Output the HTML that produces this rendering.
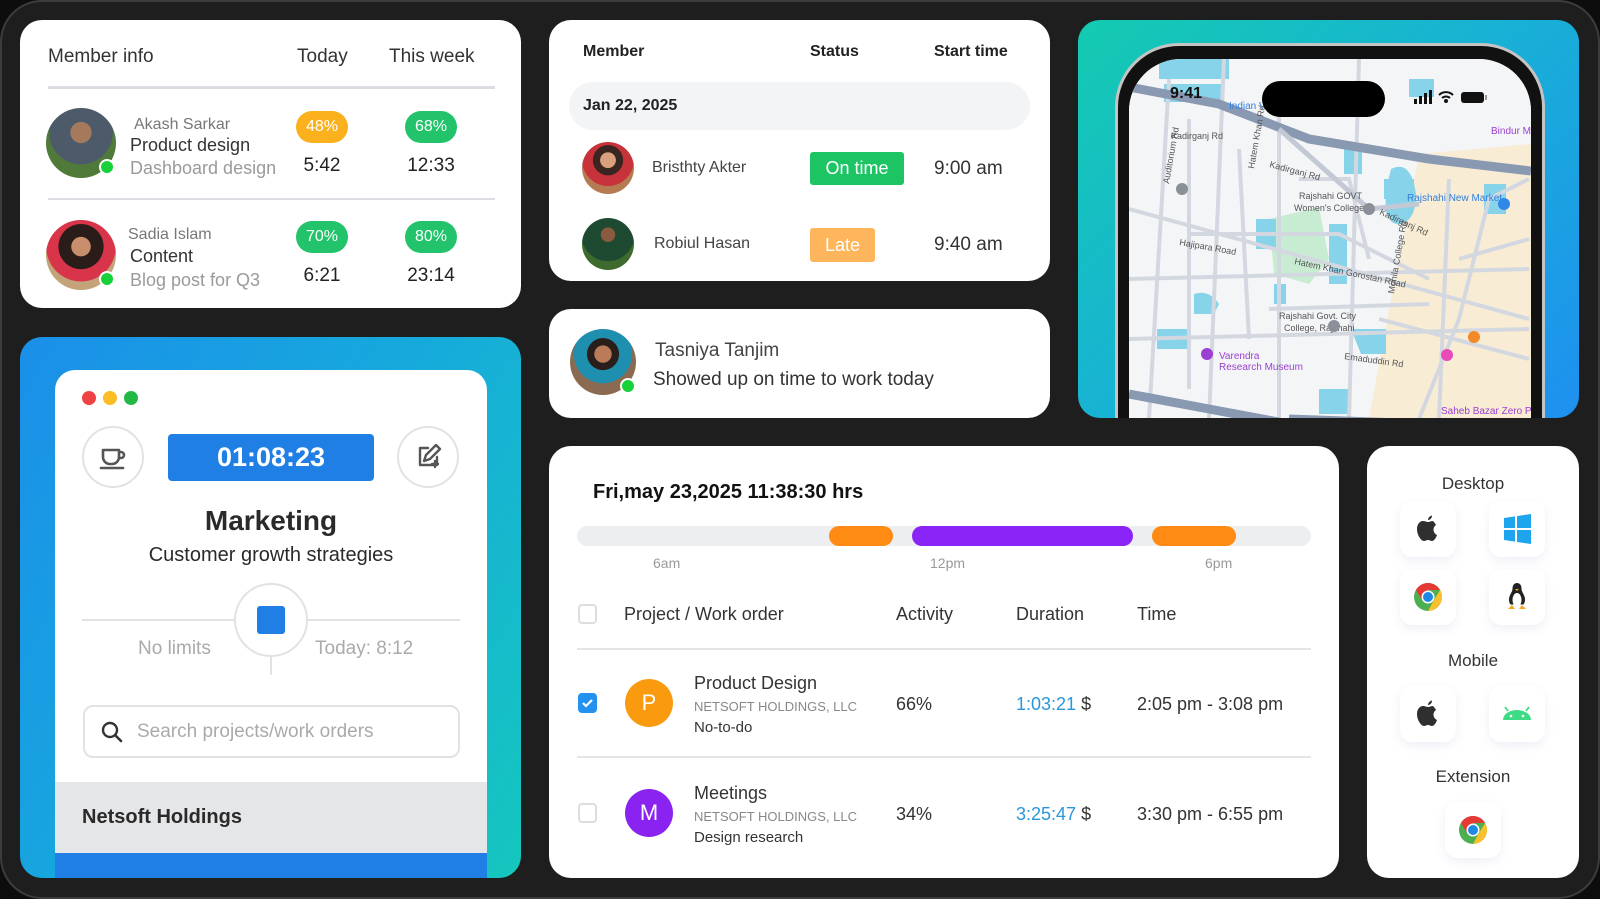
<!DOCTYPE html>
<html><head><meta charset="utf-8"><style>
*{box-sizing:border-box;margin:0;padding:0}
body{width:1600px;height:899px;background:#0d0d0d;font-family:"Liberation Sans",Arial,sans-serif;color:#2b2b2b;overflow:hidden;position:relative}
.frame{position:absolute;left:0;top:0;width:1600px;height:899px;background:#1e1e1e;border:2px solid #3c3c3c;border-radius:42px}
.card{position:absolute;background:#fff;border-radius:22px;overflow:hidden}
.abs{position:absolute;white-space:nowrap}
.av{position:absolute;border-radius:50%}
.dot{position:absolute;width:16px;height:16px;border-radius:50%;background:#16d13a;border:2px solid #fff}
.badge{position:absolute;width:52px;height:32px;border-radius:16px;color:#fff;font-size:16px;text-align:center;line-height:32px}
.tile{position:absolute;width:56px;height:56px;border-radius:12px;background:#fff;box-shadow:0 4px 10px rgba(120,130,180,.12)}
.ctr{position:absolute;text-align:center;white-space:nowrap}
</style></head><body>
<div class="frame"></div>

<!-- Card 1 member info -->
<div class="card" style="left:20px;top:20px;width:501px;height:288px">
  <div class="abs" style="left:28px;top:26px;font-size:19px;color:#333">Member info</div>
  <div class="abs" style="left:277px;top:26px;font-size:19px;color:#333">Today</div>
  <div class="abs" style="left:369px;top:26px;font-size:19px;color:#333">This week</div>
  <div class="abs" style="left:28px;top:66px;width:447px;height:3px;background:#dcdde2"></div>
  <div class="av" style="left:26px;top:88px;width:70px;height:70px;background:radial-gradient(circle at 50% 35%,#a57a5c 0 18%,#4d5a6a 19% 55%,#4f7a3a 56%)"></div>
  <div class="dot" style="left:79px;top:139px"></div>
  <div class="abs" style="left:114px;top:96px;font-size:16px;color:#777">Akash Sarkar</div>
  <div class="abs" style="left:110px;top:115px;font-size:18px;color:#333">Product design</div>
  <div class="abs" style="left:110px;top:138px;font-size:18px;color:#9a9a9a">Dashboard design</div>
  <div class="badge" style="left:276px;top:91px;background:#fbb01e">48%</div>
  <div class="badge" style="left:385px;top:91px;background:#22c36a">68%</div>
  <div class="ctr" style="left:262px;width:80px;top:135px;font-size:19px;color:#222">5:42</div>
  <div class="ctr" style="left:371px;width:80px;top:135px;font-size:19px;color:#222">12:33</div>
  <div class="abs" style="left:28px;top:178px;width:447px;height:2px;background:#dcdde2"></div>
  <div class="av" style="left:26px;top:200px;width:70px;height:70px;background:radial-gradient(circle at 50% 38%,#c98e6c 0 17%,#2a1c18 18% 40%,#d8344a 41% 62%,#c4a37a 63%)"></div>
  <div class="dot" style="left:79px;top:251px"></div>
  <div class="abs" style="left:108px;top:206px;font-size:16px;color:#777">Sadia Islam</div>
  <div class="abs" style="left:110px;top:226px;font-size:18px;color:#333">Content</div>
  <div class="abs" style="left:110px;top:250px;font-size:18px;color:#9a9a9a">Blog post for Q3</div>
  <div class="badge" style="left:276px;top:201px;background:#22c36a">70%</div>
  <div class="badge" style="left:385px;top:201px;background:#22c36a">80%</div>
  <div class="ctr" style="left:262px;width:80px;top:245px;font-size:19px;color:#222">6:21</div>
  <div class="ctr" style="left:371px;width:80px;top:245px;font-size:19px;color:#222">23:14</div>
</div>

<!-- Card 2 timer -->
<div class="card" style="left:20px;top:337px;width:501px;height:541px;background:linear-gradient(120deg,#1b8fe9 0%,#16aadc 50%,#15c7be 100%)">
  <div style="position:absolute;left:35px;top:33px;width:432px;height:520px;background:#fff;border-radius:20px 20px 0 0;overflow:hidden">
    <div class="av" style="left:27px;top:21px;width:14px;height:14px;background:#ef4343"></div>
    <div class="av" style="left:48px;top:21px;width:14px;height:14px;background:#fbbc24"></div>
    <div class="av" style="left:69px;top:21px;width:14px;height:14px;background:#22b845"></div>
    <div class="av" style="left:27px;top:56px;width:62px;height:62px;border:2px solid #e2e2e2;background:#fff">
      <svg width="58" height="58" viewBox="0 0 58 58" style="position:absolute;left:0;top:0"><path d="M19 22h16v7a7 7 0 0 1-7 7h-2a7 7 0 0 1-7-7z M35 24h2a3 3 0 0 1 0 6h-2 M17 40h22" fill="none" stroke="#555" stroke-width="2.6" stroke-linecap="round" stroke-linejoin="round"/></svg>
    </div>
    <div class="abs" style="left:113px;top:64px;width:206px;height:47px;background:#1f7fe5;border-radius:4px;color:#fff;font-weight:bold;font-size:27px;text-align:center;line-height:47px">01:08:23</div>
    <div class="av" style="left:342px;top:56px;width:62px;height:62px;border:2px solid #e2e2e2;background:#fff">
      <svg width="58" height="58" viewBox="0 0 58 58" style="position:absolute;left:0;top:0"><path d="M29 20h-8v17h17v-8 M25 33l2-6 10-10 4 4-10 10z M36 33v6 M33 36h6" fill="none" stroke="#555" stroke-width="2.4" stroke-linecap="round" stroke-linejoin="round"/></svg>
    </div>
    <div class="abs" style="left:0;width:432px;top:135px;text-align:center;font-weight:bold;font-size:28px;color:#2a2a2a">Marketing</div>
    <div class="abs" style="left:0;width:432px;top:174px;text-align:center;font-size:20px;color:#2a2a2a">Customer growth strategies</div>
    <div class="abs" style="left:27px;top:249px;width:378px;height:2px;background:#e2e2e2"></div>
    <div class="abs" style="left:215px;top:287px;width:2px;height:18px;background:#e2e2e2"></div>
    <div class="av" style="left:179px;top:213px;width:74px;height:74px;border:2px solid #e2e2e2;background:#fff"></div>
    <div class="abs" style="left:202px;top:236px;width:28px;height:28px;background:#1f7fe5;border-radius:3px"></div>
    <div class="abs" style="left:83px;top:268px;font-size:19px;color:#aaa">No limits</div>
    <div class="abs" style="left:260px;top:268px;font-size:19px;color:#aaa">Today: 8:12</div>
    <div class="abs" style="left:28px;top:335px;width:377px;height:53px;border:2px solid #e2e2e2;border-radius:10px"></div>
    <svg class="abs" style="left:45px;top:350px" width="24" height="24" viewBox="0 0 24 24"><circle cx="10" cy="10" r="7" fill="none" stroke="#333" stroke-width="2.4"/><path d="M15 15l6 6" stroke="#333" stroke-width="2.6" stroke-linecap="round"/></svg>
    <div class="abs" style="left:82px;top:351px;font-size:19px;color:#aaa">Search projects/work orders</div>
    <div class="abs" style="left:0;top:412px;width:432px;height:71px;background:#e5e6e8"></div>
    <div class="abs" style="left:27px;top:436px;font-weight:bold;font-size:20px;color:#2a2a2a">Netsoft Holdings</div>
    <div class="abs" style="left:0;top:483px;width:432px;height:60px;background:#1f7fe5"></div>
  </div>
</div>

<!-- Card 3 status -->
<div class="card" style="left:549px;top:20px;width:501px;height:261px">
  <div class="abs" style="left:34px;top:23px;font-size:16px;font-weight:bold;color:#222">Member</div>
  <div class="abs" style="left:261px;top:23px;font-size:16px;font-weight:bold;color:#222">Status</div>
  <div class="abs" style="left:385px;top:23px;font-size:16px;font-weight:bold;color:#222">Start time</div>
  <div class="abs" style="left:20px;top:62px;width:461px;height:48px;background:#f3f4f6;border-radius:24px"></div>
  <div class="abs" style="left:34px;top:77px;font-size:16px;font-weight:bold;color:#222">Jan 22, 2025</div>
  <div class="av" style="left:33px;top:122px;width:52px;height:52px;background:radial-gradient(circle at 50% 35%,#d9a07e 0 18%,#3a2520 19% 35%,#c8323a 36% 60%,#b57c54 61%)"></div>
  <div class="abs" style="left:103px;top:139px;font-size:16px;color:#444">Bristhty Akter</div>
  <div class="abs" style="left:261px;top:132px;width:94px;height:33px;background:#1dc464;border-radius:3px;color:#fff;font-size:18px;text-align:center;line-height:33px">On time</div>
  <div class="abs" style="left:385px;top:138px;font-size:19px;color:#333">9:00 am</div>
  <div class="av" style="left:33px;top:198px;width:52px;height:52px;background:radial-gradient(circle at 50% 32%,#8c5a3e 0 16%,#1f4a32 17% 60%,#3e6a2e 61%)"></div>
  <div class="abs" style="left:105px;top:215px;font-size:16px;color:#444">Robiul Hasan</div>
  <div class="abs" style="left:261px;top:208px;width:65px;height:34px;background:#ffb55c;border-radius:3px;color:#fff;font-size:18px;text-align:center;line-height:34px">Late</div>
  <div class="abs" style="left:385px;top:214px;font-size:19px;color:#333">9:40 am</div>
</div>

<!-- Card 4 notification -->
<div class="card" style="left:549px;top:309px;width:501px;height:109px">
  <div class="av" style="left:21px;top:20px;width:66px;height:66px;background:radial-gradient(circle at 50% 38%,#b97b5a 0 16%,#2a1e1a 17% 30%,#1f8fb0 31% 55%,#8a6a50 56%)"></div>
  <div class="dot" style="left:71px;top:69px"></div>
  <div class="abs" style="left:106px;top:31px;font-size:19px;color:#444">Tasniya Tanjim</div>
  <div class="abs" style="left:104px;top:60px;font-size:19px;color:#333">Showed up on time to work today</div>
</div>

<!-- Card 5 map phone -->
<div class="card" style="left:1078px;top:20px;width:501px;height:398px;background:linear-gradient(135deg,#14cbb0 0%,#18b3d3 45%,#1e90f0 100%)">
  <div style="position:absolute;left:37px;top:23px;width:430px;height:440px;border-radius:64px;background:#111;border:3px solid #c4c4c4">
    <div style="position:absolute;left:11px;top:13px;width:402px;height:430px;border-radius:52px;overflow:hidden;background:#f4f5f7">
      <svg width="402" height="360" viewBox="0 0 402 360">
        <rect width="402" height="360" fill="#f4f5f7"/>
        <path d="M290 95 L402 85 L402 360 L240 360 L260 250 L280 150Z" fill="#f8ecd5"/>
        <path d="M140 160 L190 148 L200 200 L180 225 L145 215Z" fill="#c8ecd2"/>
        <g fill="#86d3ea">
          <path d="M30 0h70v20H30z M35 25h60v18H35z"/><path d="M262 110q20-10 25 25q0 30-20 30q-18-5-5-55z"/>
          <path d="M127 160h20v30h-20z"/><path d="M200 165h18v60h-18z"/><path d="M222 270h35v25h-25z"/>
          <path d="M65 235q15-5 25 10l-5 10h-20z"/><path d="M28 270h30v20h-30z"/><path d="M145 225h12v20h-12z"/>
          <path d="M255 120h30v20h-30z"/><path d="M355 125h22v30h-22z"/><path d="M280 20h25v18h-25z"/><path d="M190 330h30v25h-30z"/><path d="M215 90h18v25h-18z"/>
        </g>
        <g fill="none" stroke="#d3d8e0" stroke-width="4">
          <path d="M40 20 L20 360"/><path d="M95 0 L90 120 L80 360"/><path d="M110 90 L120 280"/><path d="M0 150 L400 260"/>
          <path d="M60 175 L210 175 L300 220"/><path d="M0 220 L400 210"/><path d="M170 120 L220 120 L240 200"/><path d="M230 0 L220 360"/>
          <path d="M320 120 L310 360"/><path d="M0 280 L400 270"/><path d="M330 200 L400 180"/><path d="M60 60 L60 330"/><path d="M140 250 L300 245"/>
          <path d="M400 120 L360 140 L330 260 L290 360"/><path d="M150 30 L150 360"/><path d="M250 260 L400 300"/>
        </g>
        <g fill="none" stroke="#8a99b2" stroke-width="9">
          <path d="M0 28 L90 45 L180 80 L300 100 L402 112"/>
          <path d="M0 335 L80 350 L160 365"/><path d="M160 360 L300 365"/>
        </g>
        <path d="M150 70 L240 150 L290 145" fill="none" stroke="#c2c9d4" stroke-width="5"/>
        <g font-family="Liberation Sans,sans-serif" font-size="9" fill="#555">
          <text x="42" y="80">Kadirganj Rd</text>
          <text x="140" y="108" transform="rotate(15 140 108)">Kadirganj Rd</text>
          <text x="250" y="155" transform="rotate(25 250 155)">Kadirganj Rd</text>
          <text x="170" y="140">Rajshahi GOVT</text><text x="165" y="152">Women's College</text>
          <text x="50" y="186" transform="rotate(10 50 186)">Hajipara Road</text>
          <text x="165" y="205" transform="rotate(12 165 205)">Hatem Khan Gorostan Road</text>
          <text x="150" y="260">Rajshahi Govt. City</text><text x="155" y="272">College, Rajshahi</text>
          <text x="215" y="300" transform="rotate(8 215 300)">Emaduddin Rd</text>
          <text x="265" y="235" transform="rotate(-80 265 235)">Mohila College Rd</text>
          <text x="40" y="125" transform="rotate(-80 40 125)">Auditorium Rd</text>
          <text x="125" y="110" transform="rotate(-80 125 110)">Hatem Khan Rd</text>
        </g>
        <g font-family="Liberation Sans,sans-serif" font-size="10" fill="#2f7fe0">
          <text x="278" y="142">Rajshahi New Market</text><text x="100" y="50">Indian Vi</text>
        </g>
        <g font-family="Liberation Sans,sans-serif" font-size="10" fill="#9a3fd1">
          <text x="90" y="300">Varendra</text><text x="90" y="311">Research Museum</text><text x="312" y="355">Saheb Bazar Zero Point</text><text x="362" y="75">Bindur Mo</text>
        </g>
        <circle cx="375" cy="145" r="6" fill="#2f87e8"/><circle cx="345" cy="278" r="6" fill="#f28a2a"/><circle cx="318" cy="296" r="6" fill="#e84ab8"/><circle cx="78" cy="295" r="6" fill="#9a3fd1"/>
        <circle cx="53" cy="130" r="6" fill="#8a8f98"/><circle cx="240" cy="150" r="6" fill="#8a8f98"/><circle cx="205" cy="267" r="6" fill="#8a8f98"/>
      </svg>
      <div class="abs" style="left:41px;top:26px;font-size:16px;font-weight:bold;color:#111">9:41</div>
      <div class="abs" style="left:133px;top:22px;width:123px;height:36px;border-radius:18px;background:#000"></div>
      <svg class="abs" style="left:285px;top:30px" width="80" height="16" viewBox="0 0 80 16">
        <rect x="0" y="10" width="3" height="5" fill="#111"/><rect x="5" y="7" width="3" height="8" fill="#111"/><rect x="10" y="4" width="3" height="11" fill="#111"/><rect x="15" y="1" width="3" height="14" fill="#111"/>
        <path d="M25 6a10 10 0 0 1 14 0M28 9a6 6 0 0 1 8 0" fill="none" stroke="#111" stroke-width="2"/><circle cx="32" cy="12" r="2" fill="#111"/>
        <rect x="47" y="3" width="23" height="11" rx="3" fill="#111"/><rect x="71" y="6" width="2" height="5" fill="#999"/>
      </svg>
    </div>
  </div>
</div>

<!-- Card 6 timeline -->
<div class="card" style="left:549px;top:446px;width:790px;height:432px">
  <div class="abs" style="left:44px;top:35px;font-size:20px;font-weight:bold;color:#111">Fri,may 23,2025 11:38:30 hrs</div>
  <div class="abs" style="left:28px;top:80px;width:734px;height:20px;background:#eceef0;border-radius:10px"></div>
  <div class="abs" style="left:280px;top:80px;width:64px;height:20px;background:#ff8a14;border-radius:10px"></div>
  <div class="abs" style="left:363px;top:80px;width:221px;height:20px;background:#8a23f5;border-radius:10px"></div>
  <div class="abs" style="left:603px;top:80px;width:84px;height:20px;background:#ff8a14;border-radius:10px"></div>
  <div class="abs" style="left:104px;top:109px;font-size:14px;color:#999">6am</div>
  <div class="abs" style="left:381px;top:109px;font-size:14px;color:#999">12pm</div>
  <div class="abs" style="left:656px;top:109px;font-size:14px;color:#999">6pm</div>
  <div class="abs" style="left:29px;top:158px;width:19px;height:20px;border:2px solid #ddd;border-radius:4px"></div>
  <div class="abs" style="left:75px;top:158px;font-size:18px;color:#333">Project / Work order</div>
  <div class="abs" style="left:347px;top:158px;font-size:18px;color:#333">Activity</div>
  <div class="abs" style="left:467px;top:158px;font-size:18px;color:#333">Duration</div>
  <div class="abs" style="left:588px;top:158px;font-size:18px;color:#333">Time</div>
  <div class="abs" style="left:28px;top:202px;width:734px;height:2px;background:#e4e5e8"></div>
  <div class="abs" style="left:29px;top:247px;width:19px;height:20px;background:#2291f0;border-radius:4px"><svg width="19" height="20" viewBox="0 0 19 20"><path d="M5 10l3 3 6-6" fill="none" stroke="#fff" stroke-width="2.2"/></svg></div>
  <div class="av" style="left:76px;top:233px;width:48px;height:48px;background:#fa9a0e;color:#fff;font-size:22px;text-align:center;line-height:48px">P</div>
  <div class="abs" style="left:145px;top:227px;font-size:18px;color:#333">Product Design</div>
  <div class="abs" style="left:145px;top:253px;font-size:13px;color:#888">NETSOFT HOLDINGS, LLC</div>
  <div class="abs" style="left:145px;top:273px;font-size:15px;color:#333">No-to-do</div>
  <div class="abs" style="left:347px;top:248px;font-size:18px;color:#333">66%</div>
  <div class="abs" style="left:467px;top:248px;font-size:18px;color:#2a96dc">1:03:21 <span style="color:#333">$</span></div>
  <div class="abs" style="left:588px;top:248px;font-size:18px;color:#333">2:05 pm - 3:08 pm</div>
  <div class="abs" style="left:28px;top:310px;width:734px;height:2px;background:#e4e5e8"></div>
  <div class="abs" style="left:29px;top:357px;width:19px;height:20px;border:2px solid #ddd;border-radius:4px"></div>
  <div class="av" style="left:76px;top:343px;width:48px;height:48px;background:#8a23f0;color:#fff;font-size:22px;text-align:center;line-height:48px">M</div>
  <div class="abs" style="left:145px;top:337px;font-size:18px;color:#333">Meetings</div>
  <div class="abs" style="left:145px;top:363px;font-size:13px;color:#888">NETSOFT HOLDINGS, LLC</div>
  <div class="abs" style="left:145px;top:383px;font-size:15px;color:#333">Design research</div>
  <div class="abs" style="left:347px;top:358px;font-size:18px;color:#333">34%</div>
  <div class="abs" style="left:467px;top:358px;font-size:18px;color:#2a96dc">3:25:47 <span style="color:#333">$</span></div>
  <div class="abs" style="left:588px;top:358px;font-size:18px;color:#333">3:30 pm - 6:55 pm</div>
</div>

<!-- Card 7 platforms -->
<div class="card" style="left:1367px;top:446px;width:212px;height:432px">
  <div class="abs" style="left:0;width:212px;top:28px;text-align:center;font-size:17px;color:#333">Desktop</div>
  <div class="tile" style="left:33px;top:55px"><svg width="56" height="56" viewBox="0 0 56 56"><path d="M33 20c-2 0-3.5 1-5 1s-3-1-5-1c-3 0-6 3-6 8 0 6 4 12 7 12 1.5 0 2.5-1 4-1s2.5 1 4 1c2 0 4-3 5-6-2-1-3.5-3-3.5-5.5 0-2 1-3.5 2.5-4.5-1-2-3-4-3-4z M28 19c0-2 1.5-4 4-4.5 0 2.5-1.5 4.3-4 4.5z" fill="#2f2f2f"/></svg></div>
  <div class="tile" style="left:122px;top:55px"><svg width="56" height="56" viewBox="0 0 56 56"><path d="M15 17l11-1.6V27H15z M28 15.1L42 13v14H28z M15 29h11v11.6L15 39z M28 29h14v14l-14-2z" fill="#1ea5ee"/></svg></div>
  <div class="tile" style="left:33px;top:123px"><svg width="56" height="56" viewBox="0 0 56 56"><circle cx="28" cy="28" r="14" fill="#4caf50"/><path d="M40.1 21A14 14 0 0 1 28 42l6-11z" fill="#fbc02d"/><path d="M28 14a14 14 0 0 0-12.1 7L22 31l6-10h12.1A14 14 0 0 0 28 14z" fill="#e53935"/><circle cx="28" cy="28" r="6.5" fill="#fff"/><circle cx="28" cy="28" r="5" fill="#1e88e5"/></svg></div>
  <div class="tile" style="left:122px;top:123px"><svg width="56" height="56" viewBox="0 0 56 56"><path d="M28 14c-3 0-4.5 2.5-4.5 5.5 0 3-2 5-3 8-1 3-.5 6 1 8h13c1.5-2 2-5 1-8s-3-5-3-8c0-3-1.5-5.5-4.5-5.5z" fill="#222"/><ellipse cx="28" cy="31" rx="4.5" ry="7" fill="#fff"/><path d="M19 40l4-4 3 4z M37 40l-4-4-3 4z" fill="#f5a623"/><path d="M26 20h4l-2 2z" fill="#f5a623"/></svg></div>
  <div class="abs" style="left:0;width:212px;top:205px;text-align:center;font-size:17px;color:#333">Mobile</div>
  <div class="tile" style="left:33px;top:240px"><svg width="56" height="56" viewBox="0 0 56 56"><path d="M33 20c-2 0-3.5 1-5 1s-3-1-5-1c-3 0-6 3-6 8 0 6 4 12 7 12 1.5 0 2.5-1 4-1s2.5 1 4 1c2 0 4-3 5-6-2-1-3.5-3-3.5-5.5 0-2 1-3.5 2.5-4.5-1-2-3-4-3-4z M28 19c0-2 1.5-4 4-4.5 0 2.5-1.5 4.3-4 4.5z" fill="#2f2f2f"/></svg></div>
  <div class="tile" style="left:122px;top:240px"><svg width="56" height="56" viewBox="0 0 56 56"><path d="M14 34a14 10 0 0 1 28 0z" fill="#3ddc84"/><path d="M19 25l-3-4 M37 25l3-4" stroke="#3ddc84" stroke-width="1.8"/><circle cx="22" cy="30" r="1.3" fill="#fff"/><circle cx="34" cy="30" r="1.3" fill="#fff"/></svg></div>
  <div class="abs" style="left:0;width:212px;top:321px;text-align:center;font-size:17px;color:#333">Extension</div>
  <div class="tile" style="left:78px;top:356px"><svg width="56" height="56" viewBox="0 0 56 56"><circle cx="28" cy="28" r="14" fill="#4caf50"/><path d="M40.1 21A14 14 0 0 1 28 42l6-11z" fill="#fbc02d"/><path d="M28 14a14 14 0 0 0-12.1 7L22 31l6-10h12.1A14 14 0 0 0 28 14z" fill="#e53935"/><circle cx="28" cy="28" r="6.5" fill="#fff"/><circle cx="28" cy="28" r="5" fill="#1e88e5"/></svg></div>
</div>
</body></html>
